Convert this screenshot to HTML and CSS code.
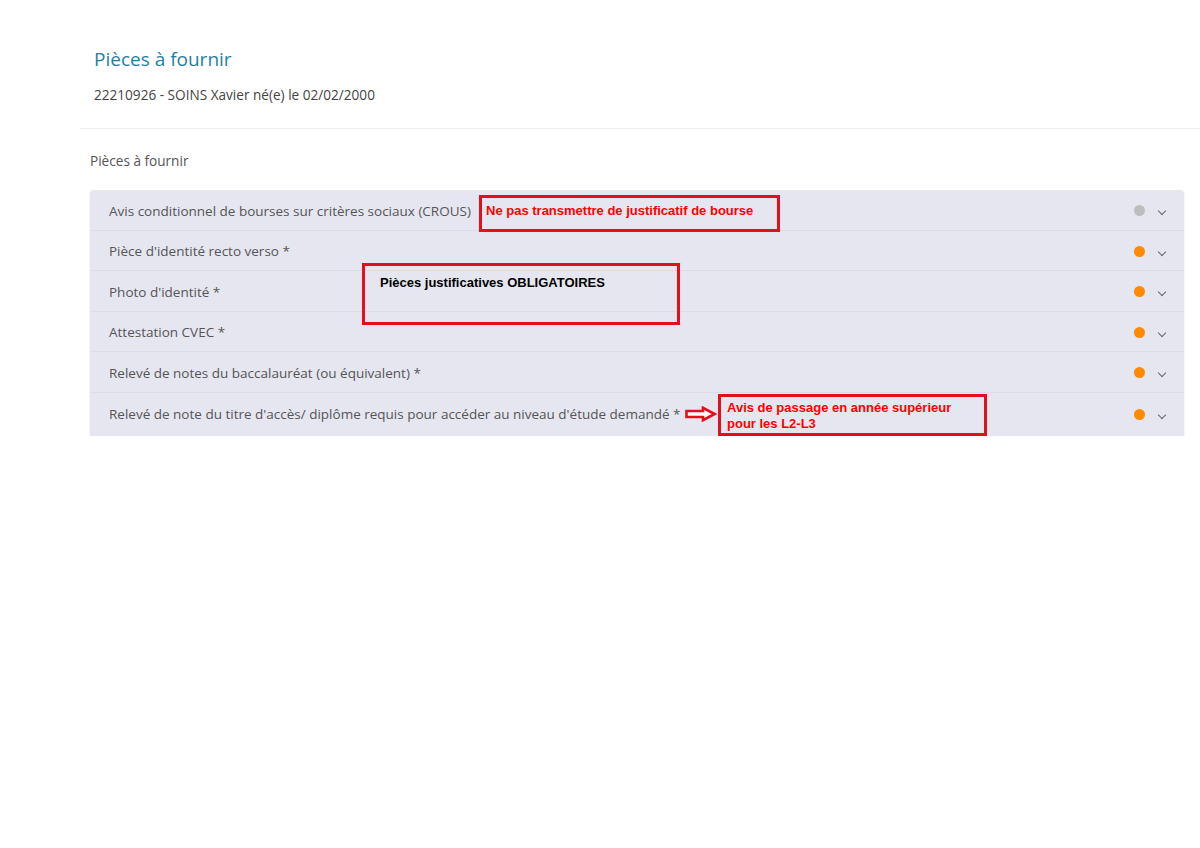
FILE: index.html
```html
<!DOCTYPE html>
<html lang="fr">
<head>
    <meta charset="UTF-8">
    <meta name="viewport" content="width=device-width, initial-scale=1.0">
    <title>Pièces à fournir</title>
    <link rel="stylesheet" href="styles.css">
</head>
<body>

<!-- En-tête du dossier -->
<div class="entete">
    <h1>Pièces à fournir</h1>
    <p class="etudiant">22210926 - SOINS Xavier né(e) le 02/02/2000</p>
</div>

<div class="contenu">
    <p class="libelle">Pièces à fournir</p>

    <div class="pieces">
        <div class="piece">
            <span class="nom">Avis conditionnel de bourses sur critères sociaux (CROUS)</span>
            <span class="statut gris"></span>
            <span class="chevron"></span>
        </div>
        <div class="piece">
            <span class="nom">Pièce d'identité recto verso *</span>
            <span class="statut"></span>
            <span class="chevron"></span>
        </div>
        <div class="piece">
            <span class="nom">Photo d'identité *</span>
            <span class="statut"></span>
            <span class="chevron"></span>
        </div>
        <div class="piece">
            <span class="nom">Attestation CVEC *</span>
            <span class="statut"></span>
            <span class="chevron"></span>
        </div>
        <div class="piece">
            <span class="nom">Relevé de notes du baccalauréat (ou équivalent) *</span>
            <span class="statut"></span>
            <span class="chevron"></span>
        </div>
        <div class="piece derniere">
            <span class="nom">Relevé de note du titre d'accès/ diplôme requis pour accéder au niveau d'étude demandé *</span>
            <span class="statut"></span>
            <span class="chevron"></span>
        </div>

        <!-- Annotations ajoutées par-dessus la capture -->
        <div class="note note-bourse">Ne pas transmettre de justificatif de bourse</div>
        <div class="note note-obligatoire">Pièces justificatives OBLIGATOIRES</div>
        <svg class="fleche" viewBox="0 0 32 16" width="32" height="16">
            <path d="M1.5 5 H18 V1.8 L29.5 8 L18 14.2 V11 H1.5 Z" fill="#fff" stroke="#e3101c" stroke-width="2.6" stroke-linejoin="miter"/>
        </svg>
        <div class="note note-passage">Avis de passage en année supérieur<br>pour les L2-L3</div>
    </div>
</div>

</body>
</html>
```

FILE: styles.css
```css
body {
    font-family: "Open Sans", Arial, sans-serif;
    background-color: #fff;
    margin: 0;
    color: #555;
}

.entete {
    margin-left: 80px;
    padding: 46px 14px 23px;
    border-bottom: 1px solid #f0f0f0;
}

h1 {
    margin: 0;
    font-size: 19px;
    font-weight: normal;
    color: #1f7fa3;
    line-height: 26px;
}

.etudiant {
    margin: 13px 0 0;
    font-size: 13.6px;
    color: #444;
    line-height: 20px;
}

.contenu {
    padding: 0 16px 0 90px;
}

.libelle {
    margin: 22px 0 19px;
    font-size: 13.6px;
    line-height: 20px;
    color: #555;
}

.pieces {
    position: relative;
    background-color: #e6e6f0;
    border-radius: 4px 4px 0 0;
    box-shadow: 0 1px 2px rgba(0, 0, 0, 0.12);
}

.piece {
    display: flex;
    align-items: center;
    box-sizing: border-box;
    height: 40.5px;
    padding: 2px 17px 0 19px;
    border-bottom: 1px solid #dcdce6;
    font-size: 13.5px;
}

.piece.derniere {
    border-bottom: none;
    height: 43px;
    padding-bottom: 2px;
}

.nom {
    flex: 1;
}

.statut {
    width: 11px;
    height: 11px;
    border-radius: 50%;
    background-color: #ff8a00;
}

.statut.gris {
    background-color: #bdbdbd;
}

.chevron {
    width: 5px;
    height: 5px;
    margin: 0 2px 3px 14px;
    border-right: 1.5px solid #666;
    border-bottom: 1.5px solid #666;
    transform: translateY(2px) rotate(45deg);
}

.note {
    position: absolute;
    box-sizing: border-box;
    border: 3px solid #e3101c;
    font-family: "Liberation Sans", Arial, sans-serif;
    font-size: 13px;
    font-weight: bold;
    line-height: 16px;
    color: #f00;
}

.note-bourse {
    left: 389px;
    top: 5px;
    width: 301px;
    height: 37px;
    padding: 5px 4px;
}

.note-obligatoire {
    left: 272px;
    top: 73px;
    width: 318px;
    height: 62px;
    padding: 9px 15px;
    color: #000;
}

.note-passage {
    left: 628px;
    top: 204px;
    width: 269px;
    height: 42px;
    padding: 3px 6px;
}

.fleche {
    position: absolute;
    left: 595px;
    top: 216px;
}
```
